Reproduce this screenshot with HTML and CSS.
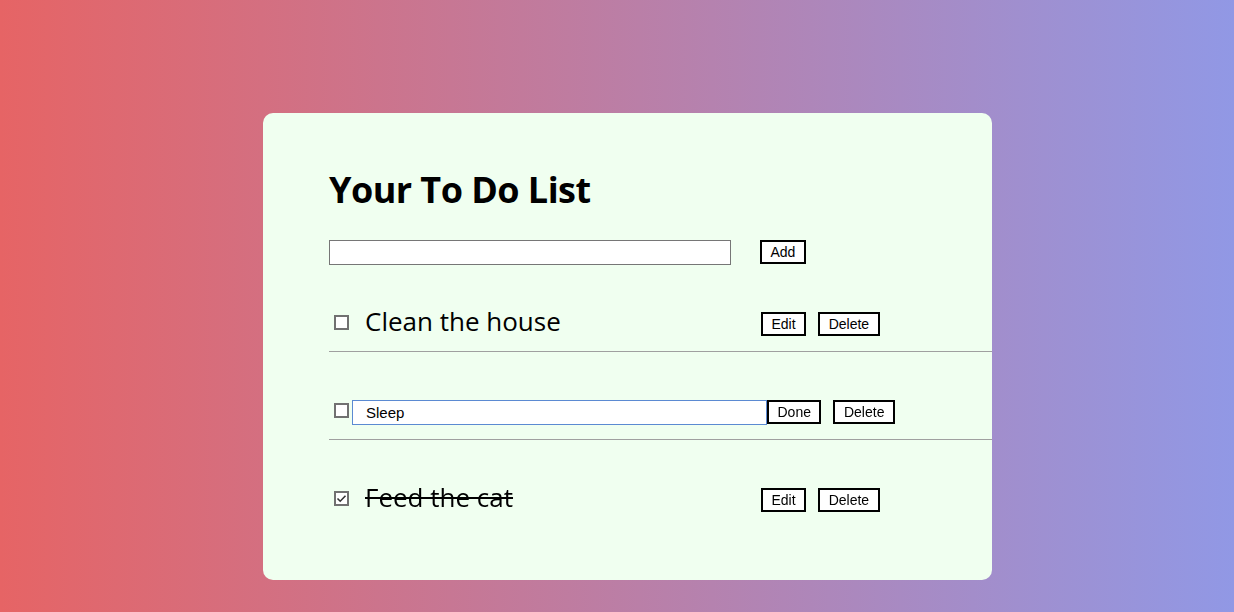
FILE: index.html
```html
<!DOCTYPE html>
<html lang="en">
<head>
<meta charset="utf-8">
<title>To Do List</title>
<link rel="stylesheet" href="styles.css">
</head>
<body>
<main class="card">
  <h1 class="title">Your To Do List</h1>
  <div class="add-row">
    <input class="new-input" type="text">
    <button class="btn">Add</button>
  </div>
  <ul class="list">
    <li class="item">
      <input class="check" type="checkbox">
      <span class="label">Clean the house</span>
      <button class="btn">Edit</button>
      <button class="btn btn-gap">Delete</button>
    </li>
    <li class="item">
      <input class="check" type="checkbox">
      <input class="edit-input" type="text" value="Sleep" autofocus>
      <button class="btn">Done</button>
      <button class="btn btn-gap">Delete</button>
    </li>
    <li class="item item-last">
      <input class="check" type="checkbox" checked>
      <span class="label label-done">Feed the cat</span>
      <button class="btn">Edit</button>
      <button class="btn btn-gap">Delete</button>
    </li>
  </ul>
</main>
</body>
</html>
```

FILE: styles.css
```css
html, body {
  margin: 0;
  padding: 0;
}

body {
  min-height: 612px;
  background: linear-gradient(to right, #e66465, #9198e5);
  font-family: "Open Sans", "Noto Sans", sans-serif;
  overflow: hidden;
}

.card {
  box-sizing: border-box;
  width: 729px;
  margin: 113px 0 0 263px;
  padding: 55px 0 53px 66px;
  background: #f0fff0;
  border-radius: 10px;
}

.title {
  margin: 0;
  font-size: 36px;
  line-height: 44px;
  font-weight: 700;
  letter-spacing: -0.55px;
  color: #000;
}

.add-row {
  display: flex;
  align-items: flex-start;
  margin-top: 28px;
  height: 24px;
}

.new-input {
  box-sizing: border-box;
  width: 402px;
  height: 25px;
  margin: 0 29px 0 0;
  border: 1px solid #767676;
  background: #fff;
  padding: 0 4px;
}

.btn {
  box-sizing: border-box;
  height: 24px;
  margin: 0;
  padding: 0 8.5px;
  border: 2px solid #000;
  background: #fff;
  color: #000;
  font-family: "Liberation Sans", Arial, sans-serif;
  font-size: 14px;
  line-height: 20px;
  border-radius: 0;
}

.btn-gap {
  margin-left: 12px;
}

.list {
  list-style: none;
  margin: 0;
  padding: 0;
}

.item {
  display: flex;
  align-items: center;
  height: 26px;
  padding: 47px 0 14px;
  border-bottom: 1px solid #a0a0a0;
}

.item-last {
  border-bottom: none;
}

.check {
  -webkit-appearance: none;
  appearance: none;
  box-sizing: border-box;
  width: 15px;
  height: 15px;
  margin: -4px 0 0 5px;
  flex: none;
  border: 2px solid #717171;
  border-radius: 0;
  background: #fff;
}

.check:checked {
  background: #fff url("data:image/svg+xml;utf8,<svg xmlns='http://www.w3.org/2000/svg' width='11' height='11' viewBox='0 0 11 11'><polyline points='1.5,5.5 4.2,8.2 9.5,2.8' fill='none' stroke='%23333' stroke-width='1.6'/></svg>") center / 11px 11px no-repeat;
}

.label {
  width: 396px;
  margin: 0 0 7px 16px;
  font-size: 26px;
  line-height: 26px;
  color: #000;
  white-space: nowrap;
}

.label-done {
  text-decoration: line-through;
  text-decoration-thickness: 2px;
}

.edit-input {
  box-sizing: border-box;
  width: 415px;
  height: 25px;
  margin: 0 0 0 3px;
  padding: 0 0 0 13px;
  border: 1px solid #5b8ad2;
  outline: none;
  background: #fff;
  font-family: "Liberation Sans", Arial, sans-serif;
  font-size: 15px;
  color: #000;
  caret-color: #000;
}
```
